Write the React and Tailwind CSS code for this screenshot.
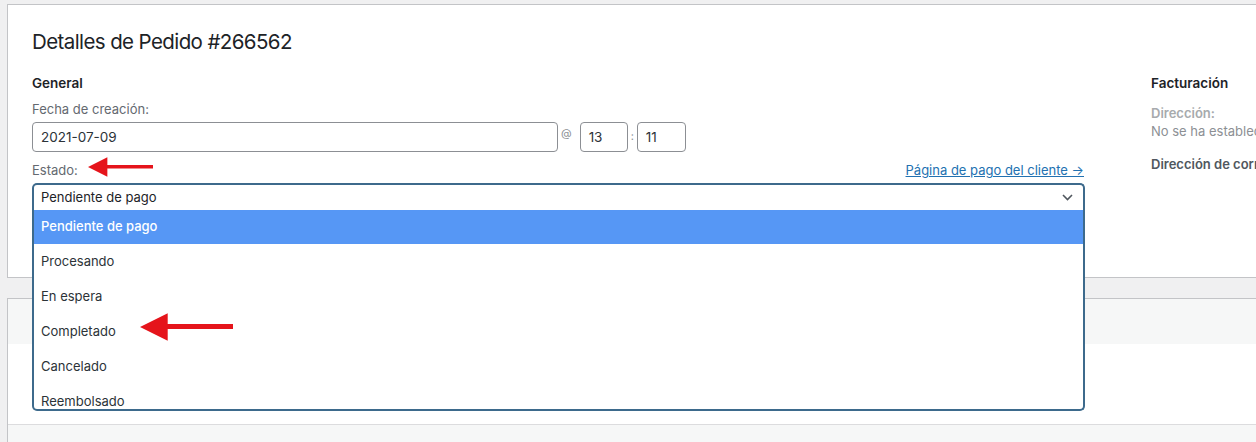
import React from 'react'

const options = ['Pendiente de pago', 'Procesando', 'En espera', 'Completado', 'Cancelado', 'Reembolsado']

function Arrow({ className }) {
  // red annotation arrow pointing left
  return (
    <svg className={className} viewBox="0 0 94 28" fill="#e5141b">
      <polygon points="0,14 28,0 28,11 94,11 94,16 28,16 28,28" />
    </svg>
  )
}

export default function App() {
  return (
    <div className="h-[442px] w-[1256px] overflow-hidden bg-[#f0f0f1] pl-[7px] pt-[4px] font-['Inter',sans-serif] text-[13px] text-[#3c434a]">
      <div className="relative h-[274px] overflow-visible border border-r-0 border-[#c3c4c7] bg-white">
        <div className="pl-[24px] pt-[22px]">
          <h2 className="text-[20.5px] leading-[30px] font-normal tracking-[-0.6px] text-[#1d2327]">Detalles de Pedido #266562</h2>
          <div className="mt-[17px] flex">
            <div className="w-[1053px] shrink-0">
              <h3 className="text-[13.5px] font-semibold leading-[18px] text-[#1d2327]">General</h3>
              <div className="mt-[9px] leading-[16px] text-[#646970]">Fecha de creación:</div>
              <div className="mt-[5px] flex items-center">
                <div className="flex h-[30px] w-[526px] items-center rounded-[4px] border border-[#8c8f94] px-[8px] text-[13.5px] text-[#2c3338]">2021-07-09</div>
                <span className="ml-[3px] mr-[8px] -mt-[8px] text-[11px] text-[#8c8f94]">@</span>
                <div className="flex h-[30px] w-[48px] items-center rounded-[4px] border border-[#8c8f94] px-[8px] text-[13.5px] text-[#2c3338]">13</div>
                <span className="mx-[3px] -mt-[2px] text-[11px] text-[#8c8f94]">:</span>
                <div className="flex h-[30px] w-[49px] items-center rounded-[4px] border border-[#8c8f94] px-[8px] text-[13.5px] text-[#2c3338]">11</div>
              </div>
              <div className="mt-[10px] flex items-end justify-between leading-[16px]">
                <span className="text-[#646970]">Estado:</span>
                <a className="mr-[1px] text-[#2271b1] underline">Página de pago del cliente →</a>
              </div>
              <div className="relative mt-[5px]">
                <div className="flex h-[27px] items-center justify-between rounded-t-[5px] border-2 border-b-0 border-[#3d6a8c] pl-[7px] pr-[10px] text-[#1d2327]">
                  <span>Pendiente de pago</span>
                  <svg width="11" height="7" viewBox="0 0 11 7" fill="none" stroke="#50575e" strokeWidth="1.6">
                    <polyline points="1,1 5.5,5.5 10,1" />
                  </svg>
                </div>
                <div className="absolute left-0 right-0 top-[27px] z-10 h-[201px] overflow-hidden rounded-b-[5px] border-2 border-t-0 border-[#3d6a8c] bg-white">
                  {options.map((o, i) => (
                    <div
                      key={o}
                      className={i === 0
                        ? 'flex h-[34px] items-center bg-[#5697f5] pl-[7px] font-medium text-white'
                        : 'flex h-[35px] items-center pl-[7px] text-[#2c3338]'}
                    >
                      {o}
                    </div>
                  ))}
                </div>
              </div>
            </div>
            <div className="ml-[66px] w-[200px] shrink-0 whitespace-nowrap">
              <h3 className="text-[13.5px] font-semibold leading-[18px] text-[#1d2327]">Facturación</h3>
              <div className="mt-[13px] font-semibold leading-[16px] text-[#a7aaad]">Dirección:</div>
              <div className="mt-[2px] leading-[16px] text-[#8c8f94]">No se ha establecido dirección de facturación.</div>
              <div className="mt-[17px] font-semibold leading-[16px] text-[#50575e]">Dirección de correo electrónico:</div>
            </div>
          </div>
        </div>
        <Arrow className="absolute left-[80px] top-[149px] h-[26px] w-[65px]" />
      </div>
      <div className="relative mt-[20px] border border-r-0 border-[#c3c4c7] bg-white">
        <div className="h-[45px] bg-[#f6f7f7]" />
        <div className="h-[81px] border-b border-[#dcdcde]" />
        <div className="h-[20px] bg-[#f6f7f7]" />
        <Arrow className="absolute left-[132px] top-[14px] z-20 h-[28px] w-[93px]" />
      </div>
    </div>
  )
}
